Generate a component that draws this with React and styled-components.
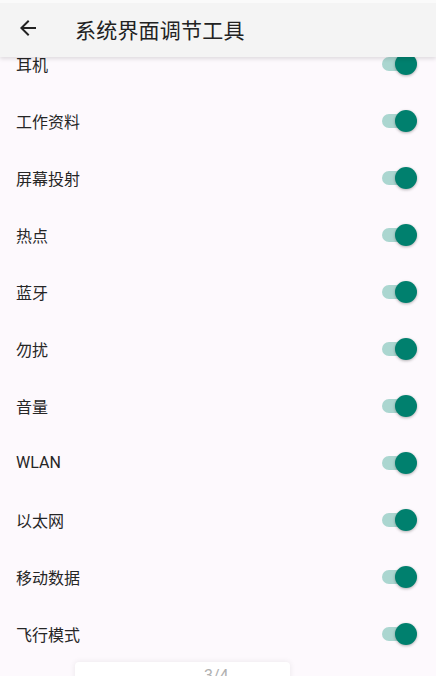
import styled, { createGlobalStyle } from 'styled-components';

const GlobalStyle = createGlobalStyle`
    html, body {
        margin: 0;
        padding: 0;
        height: 100%;
        overflow: hidden;
        background: #fdf9fd;
    }
    body {
        font-family: Roboto, "Noto Sans CJK SC", sans-serif;
    }
`;

const items = ['耳机', '工作资料', '屏幕投射', '热点', '蓝牙', '勿扰', '音量', 'WLAN', '以太网', '移动数据', '飞行模式'];

const App = () => {
    return (
        <Page>
            <GlobalStyle />
            <Header>
                <BackButton>
                    <svg width="24" height="24" viewBox="0 0 24 24">
                        <path fill="#222" d="M20 11H7.83l5.59-5.59L12 4l-8 8 8 8 1.41-1.41L7.83 13H20v-2z" />
                    </svg>
                </BackButton>
                <Title>系统界面调节工具</Title>
            </Header>
            <List>
                {items.map((label) => (
                    <Row key={label}>
                        <Label>{label}</Label>
                        <Switch>
                            <Track />
                            <Thumb />
                        </Switch>
                    </Row>
                ))}
            </List>
            <Toast>
                <ToastText>3/4</ToastText>
            </Toast>
        </Page>
    );
};

const Page = styled.div`
    position: relative;
    width: 436px;
    height: 676px;
    overflow: hidden;
    background: #fdf9fd;
    display: flex;
    flex-direction: column;
`;

const Header = styled.div`
    position: relative;
    z-index: 2;
    flex: 0 0 auto;
    height: 54px;
    border-top: 3px solid #fafafa;
    background: #f4f4f4;
    display: flex;
    align-items: center;
    box-shadow: 0 2px 4px rgba(0, 0, 0, 0.12);
`;

const BackButton = styled.div`
    width: 24px;
    height: 24px;
    margin-left: 16px;
    margin-top: -4px;
    display: flex;
`;

const Title = styled.h1`
    margin: 0 0 0 35px;
    margin-top: -3px;
    font-size: 21px;
    font-weight: 400;
    color: #222;
    letter-spacing: 0.2px;
`;

const List = styled.div`
    position: relative;
    z-index: 1;
    margin-top: -22px;
    display: flex;
    flex-direction: column;
`;

const Row = styled.div`
    height: 57px;
    flex: 0 0 57px;
    display: flex;
    align-items: center;
    justify-content: space-between;
    padding: 0 19px 0 16px;
`;

const Label = styled.span`
    font-size: 16px;
    color: #262626;
`;

const Switch = styled.div`
    position: relative;
    width: 35px;
    height: 22px;
    display: flex;
    align-items: center;
`;

const Track = styled.div`
    width: 34px;
    height: 14px;
    border-radius: 7px;
    background: #abd6d0;
`;

const Thumb = styled.div`
    position: absolute;
    right: 0;
    top: 0;
    width: 22px;
    height: 22px;
    border-radius: 50%;
    background: #00806e;
    box-shadow: 0 1px 3px rgba(0, 0, 0, 0.3);
`;

const Toast = styled.div`
    position: absolute;
    z-index: 3;
    left: 75px;
    top: 662px;
    width: 215px;
    height: 40px;
    background: #ffffff;
    border-radius: 4px;
    box-shadow: 0 0 6px rgba(0, 0, 0, 0.08);
`;

const ToastText = styled.span`
    position: absolute;
    left: 129px;
    top: 4px;
    font-size: 16px;
    color: #b0b0b0;
`;

export default App;
